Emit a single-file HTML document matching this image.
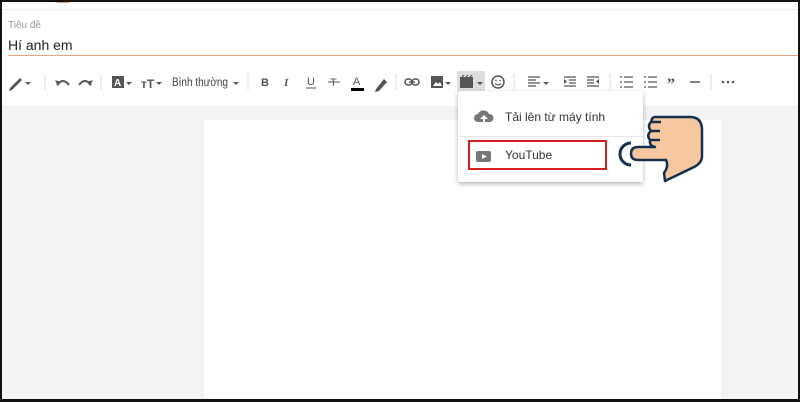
<!DOCTYPE html>
<html><head><meta charset="utf-8"><style>
*{margin:0;padding:0;box-sizing:border-box}
body{width:800px;height:402px;overflow:hidden;background:#fff;font-family:"Liberation Sans",Arial,sans-serif;position:relative}
.frame{position:absolute;inset:0;border:2px solid #111;border-bottom-width:3px;pointer-events:none;z-index:10}
.t{position:absolute;white-space:nowrap}
</style></head><body>
<div style="position:absolute;left:55px;top:0;width:16px;height:3px;background:#e8a070;border-radius:0 0 6px 6px"></div>
<div style="position:absolute;left:0;top:9px;width:800px;height:1px;background:#eee"></div>
<div class="t" style="left:8px;top:20px;font-size:10px;color:#999">Tiêu đề</div>
<div class="t" style="left:8px;top:37px;font-size:14px;color:#222">Hí anh em</div>
<div style="position:absolute;left:8px;top:55px;width:792px;height:1px;background:#f2a07c"></div>

<svg width="800" height="30" style="position:absolute;left:0;top:68px" fill="#555" stroke="#555">
<path d="M10 20 L20 10 L22 12 L12 22 L9 23Z" stroke="none"/>
<path d="M25 14 l3 3 l3 -3z" stroke="none"/>
<line x1="45" y1="6" x2="45" y2="22" stroke="#ddd"/>
<path d="M57 17 q6 -8 12 0" fill="none" stroke-width="2"/><path d="M55 12 l3 6 l3 -4z" stroke="none"/>
<path d="M79 17 q6 -8 12 0" fill="none" stroke-width="2"/><path d="M93 12 l-3 6 l-3 -4z" stroke="none"/>
<line x1="101" y1="6" x2="101" y2="22" stroke="#ddd"/>
<rect x="112" y="8" width="12" height="12" stroke="none"/><text x="114" y="18" font-size="10" fill="#fff" stroke="none" font-weight="bold" font-family="Liberation Sans">A</text>
<path d="M126 14 l3 3 l3 -3z" stroke="none"/>
<text x="141" y="20" font-size="12" stroke="none" font-weight="bold" font-family="Liberation Sans">ᴛT</text>
<path d="M156 14 l3 3 l3 -3z" stroke="none"/>
<text x="172" y="18" font-size="11.5" stroke="none" fill="#444" font-family="Liberation Sans" textLength="56" lengthAdjust="spacingAndGlyphs">Bình thường</text>
<path d="M233 14 l3 3 l3 -3z" stroke="none"/>
<line x1="248" y1="6" x2="248" y2="22" stroke="#ddd"/>
<text x="261" y="18" font-size="11" stroke="none" font-weight="bold" font-family="Liberation Sans">B</text>
<text x="284" y="18" font-size="11" stroke="none" font-weight="bold" font-style="italic" font-family="Liberation Serif">I</text>
<text x="307" y="17" font-size="11" stroke="none" font-family="Liberation Sans">U</text><line x1="306" y1="20" x2="316" y2="20"/>
<text x="330" y="18" font-size="11" stroke="none" font-family="Liberation Sans">T</text><line x1="328" y1="14" x2="340" y2="14"/>
<text x="353" y="17" font-size="11" stroke="none" font-family="Liberation Sans">A</text><rect x="351" y="20" width="13" height="3" fill="#000" stroke="none"/>
<path d="M376 21 l8 -10 l3 3 l-8 9 l-4 1z" stroke="none"/>
<line x1="396" y1="6" x2="396" y2="22" stroke="#ddd"/>
<path d="M409 14 h6" stroke-width="1.5"/><rect x="405" y="11" width="7" height="6" rx="3" fill="none" stroke-width="1.5"/><rect x="412" y="11" width="7" height="6" rx="3" fill="none" stroke-width="1.5"/>
<rect x="431" y="8" width="12" height="12" stroke="none"/><path d="M433 18 l3 -4 l2 2 l2 -2 l2 4z" fill="#fff" stroke="none"/>
<path d="M445 14 l3 3 l3 -3z" stroke="none"/>
<rect x="457" y="3" width="28" height="22" fill="#ddd" stroke="none"/>
<rect x="460" y="9" width="13" height="11" stroke="none"/><path d="M462 9 l2 -2 M466 9 l2 -2 M470 9 l2 -2" stroke-width="1.2"/>
<path d="M477 14 l3 3 l3 -3z" stroke="none"/>
<circle cx="498" cy="14" r="6" fill="none" stroke-width="1.5"/><circle cx="496" cy="12.5" r=".8" stroke="none"/><circle cx="500" cy="12.5" r=".8" stroke="none"/><path d="M495 15.5 q3 3 6 0" fill="none" stroke-width="1.2"/>
<line x1="514" y1="6" x2="514" y2="22" stroke="#ddd"/>
<path d="M528 9h12M528 12h8M528 15h12M528 18h8" stroke-width="1.3"/>
<path d="M543 14 l3 3 l3 -3z" stroke="none"/>
<path d="M564 9h12M569 12h7M569 15h7M564 18h12" stroke-width="1.3"/><path d="M564 11 l3 2.5 l-3 2.5z" stroke="none"/>
<path d="M587 9h12M587 12h7M587 15h7M587 18h12" stroke-width="1.3"/><path d="M599 11 l-3 2.5 l3 2.5z" stroke="none"/>
<line x1="610" y1="6" x2="610" y2="22" stroke="#ddd"/>
<path d="M620 9h2M624 9h9M620 14h2M624 14h9M620 19h2M624 19h9" stroke-width="1.3"/>
<path d="M644 9h2M648 9h9M644 14h2M648 14h9M644 19h2M648 19h9" stroke-width="1.3"/>
<text x="667" y="21" font-size="16" stroke="none" font-weight="bold" font-family="Liberation Serif">”</text>
<line x1="690" y1="14" x2="700" y2="14" stroke-width="1.5"/>
<line x1="711" y1="6" x2="711" y2="22" stroke="#ddd"/>
<circle cx="723" cy="14" r="1.3" stroke="none"/><circle cx="728" cy="14" r="1.3" stroke="none"/><circle cx="733" cy="14" r="1.3" stroke="none"/>
</svg>

<div style="position:absolute;left:0;top:106px;width:800px;height:296px;background:#f3f3f3"></div>
<div style="position:absolute;left:204px;top:120px;width:517px;height:282px;background:#fff"></div>

<div style="position:absolute;left:458px;top:91px;width:185px;height:91px;background:#fff;box-shadow:0 2px 5px rgba(0,0,0,.3);border-radius:2px">
 <svg width="20" height="20" style="position:absolute;left:16px;top:16px"><path d="M4 15 a4 4 0 0 1 0-8 a6 6 0 0 1 11 0 a4 4 0 0 1 1 8z" fill="#777"/><path d="M10 8 l-4 4h3v3h2v-3h3z" fill="#fff"/></svg>
 <div class="t" style="left:47px;top:19px;font-size:12px;color:#333">Tải lên từ máy tính</div>
 <div style="position:absolute;left:0;top:45px;width:185px;height:1px;background:#e6e6e6"></div>
 <div style="position:absolute;left:10px;top:49px;width:139px;height:30px;border:2px solid #d42020"></div>
 <svg width="20" height="20" style="position:absolute;left:16px;top:56px"><rect x="2" y="4" width="15" height="11" rx="2" fill="#777"/><path d="M8 7 l5 2.5 l-5 2.5z" fill="#fff"/></svg>
 <div class="t" style="left:47px;top:49px;line-height:30px;font-size:12px;color:#333">YouTube</div>
</div>

<svg width="800" height="402" style="position:absolute;left:0;top:0">
<path d="M631 143 a11 11 0 0 0 0 22" fill="none" stroke="#14304e" stroke-width="3"/>
<path d="M655 117 L690 117 Q702 117 702 130 L702 156 Q702 163 694 167 L665 181 L664 173 Q669 166 666 160 L638 160 Q631 160 631 153.5 Q631 147 638 147 L655 147 Q649 146 650 140 Q646 135 651 131 Q647 126 651 122 Q652 117 655 117Z" fill="#f6c8a0" stroke="#14304e" stroke-width="2.5" stroke-linejoin="round"/>
<path d="M651 122 h10 M651 131 h9 M650 140 h10" stroke="#14304e" stroke-width="2.5" fill="none"/>
</svg>
<div class="frame"></div>
</body></html>
